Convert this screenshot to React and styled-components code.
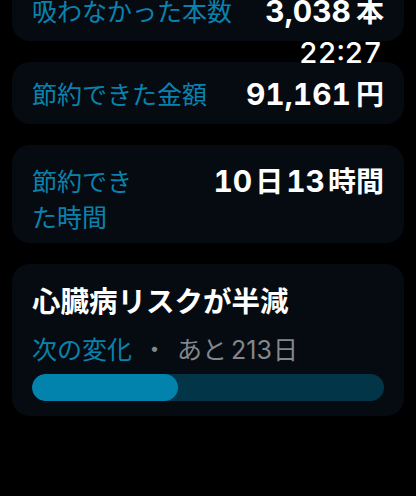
import React from "react";
import styled, { createGlobalStyle } from "styled-components";

const GlobalStyle = createGlobalStyle`
  html, body {
    margin: 0;
    padding: 0;
    background: #000;
    width: 416px;
    height: 496px;
    overflow: hidden;
  }
  body {
    font-family: Inter, "Noto Sans CJK JP", sans-serif;
    -webkit-font-smoothing: antialiased;
  }
`;

const Screen = styled.div`
  position: relative;
  width: 416px;
  height: 496px;
  overflow: hidden;
  background: #000;
`;

const List = styled.div`
  display: flex;
  flex-direction: column;
  gap: 21px;
  padding: 0 12px;
  margin-top: -21px;
`;

const Card = styled.div`
  background: #050b10;
  border-radius: 18px;
  padding: ${(p) => p.$pad || "0 20px"};
  min-height: ${(p) => p.$h || 62}px;
  box-sizing: border-box;
  display: flex;
  align-items: ${(p) => (p.$top ? "flex-start" : "center")};
  justify-content: space-between;
  gap: 12px;
`;

const Label = styled.div`
  font-family: "Noto Sans CJK JP", sans-serif;
  font-size: 25px;
  line-height: 36px;
  color: #0a82ad;
  max-width: ${(p) => (p.$max ? `${p.$max}px` : "none")};
`;

const Value = styled.div`
  font-family: Inter, "Noto Sans CJK JP", sans-serif;
  font-size: 30px;
  line-height: 36px;
  font-weight: 700;
  color: #fff;
  white-space: nowrap;
  font-variant-numeric: tabular-nums;
  display: flex;
  align-items: baseline;
  gap: ${(p) => p.$gap ?? 5}px;
`;

const Unit = styled.span`
  font-family: "Noto Sans CJK JP", sans-serif;
  font-size: 28px;
  font-weight: 700;
`;

const Clock = styled.div`
  position: absolute;
  top: 36px;
  right: 34px;
  font-family: Inter, sans-serif;
  font-size: 29px;
  font-weight: 500;
  line-height: 34px;
  color: #fff;
  font-variant-numeric: tabular-nums;
`;

const MilestoneCard = styled.div`
  background: #050b10;
  border-radius: 18px;
  padding: 18px 20px 15px;
  display: flex;
  flex-direction: column;
`;

const Title = styled.div`
  font-family: "Noto Sans CJK JP", sans-serif;
  font-size: 28.5px;
  line-height: 36px;
  font-weight: 700;
  color: #fff;
`;

const Sub = styled.div`
  margin-top: 13px;
  font-family: "Noto Sans CJK JP", sans-serif;
  font-size: 25px;
  line-height: 34px;
  display: flex;
  align-items: baseline;
`;

const SubAccent = styled.span`
  color: #0a82ad;
`;

const SubMuted = styled.span`
  color: #83878d;
  margin-left: ${(p) => p.$ml || 0}px;
`;

const Num = styled.span`
  font-family: Inter, sans-serif;
  font-size: 25px;
  margin: 0 1px 0 4px;
`;

const Track = styled.div`
  margin-top: 7px;
  height: 27px;
  border-radius: 14px;
  background: #023547;
  overflow: hidden;
`;

const Fill = styled.div`
  height: 100%;
  border-radius: 14px;
  background: #0283ad;
`;

const stats = [
  { label: "吸わなかった本数", num: "3,038", unit: "本" },
  { label: "節約できた金額", num: "91,161", unit: "円" },
];

export default function App() {
  return (
    <Screen>
      <GlobalStyle />
      <List>
        {stats.map((s) => (
          <Card key={s.label}>
            <Label>{s.label}</Label>
            <Value>
              {s.num}
              <Unit>{s.unit}</Unit>
            </Value>
          </Card>
        ))}
        <Card $top $h={98} $pad="17px 20px 9px">
          <Label $max={104}>節約できた時間</Label>
          <Value $gap={3}>
            10<Unit>日</Unit>13<Unit>時間</Unit>
          </Value>
        </Card>
        <MilestoneCard>
          <Title>心臓病リスクが半減</Title>
          <Sub>
            <SubAccent>次の変化</SubAccent>
            <SubMuted $ml={10}>・</SubMuted>
            <SubMuted $ml={10}>
              あと<Num>213</Num>日
            </SubMuted>
          </Sub>
          <Track>
            <Fill style={{ width: `${(146 / 352) * 100}%` }} />
          </Track>
        </MilestoneCard>
      </List>
      <Clock>22:27</Clock>
    </Screen>
  );
}
